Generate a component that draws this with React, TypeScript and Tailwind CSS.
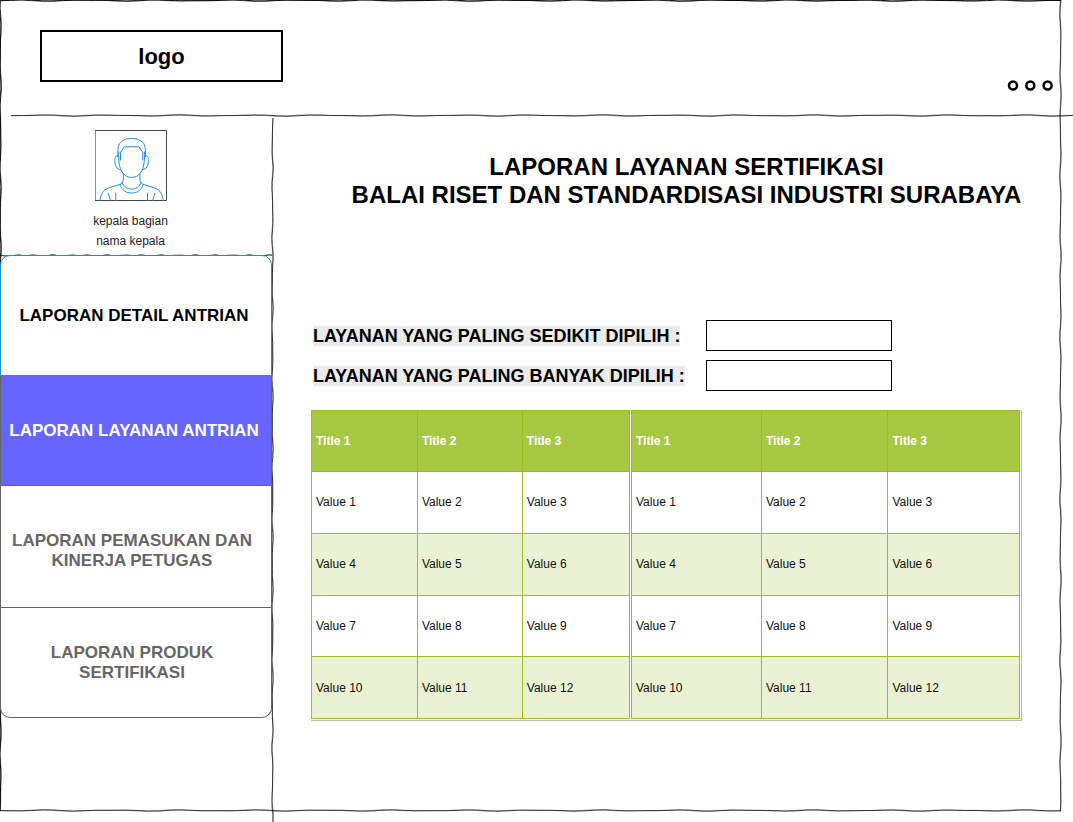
import React from "react";

/** Builds a hand-drawn looking line along a 1000-unit axis. */
function sketchPath(vertical: boolean, seed: number, center: number): string {
  const points: string[] = [];
  for (let i = 0; i <= 100; i++) {
    const along = i * 10;
    const across =
      center +
      0.45 * Math.sin(i * 0.95 + seed) +
      0.3 * Math.sin(i * 1.57 + seed * 2.3);
    const value = across.toFixed(2);
    points.push(vertical ? `${value} ${along}` : `${along} ${value}`);
  }
  return `M${points.join("L")}`;
}

type SketchProps = { vertical?: boolean; seed: number; bold?: boolean; className?: string };

function SketchLine({ vertical = false, seed, bold = false, className = "" }: SketchProps) {
  return (
    <svg
      aria-hidden="true"
      viewBox={vertical ? "0 0 4 1000" : "0 0 1000 4"}
      preserveAspectRatio="none"
      fill="none"
      stroke="#000"
      className={`pointer-events-none block overflow-visible ${className}`}
    >
      <path
        d={sketchPath(vertical, seed, 1.5)}
        strokeWidth={bold ? 0.9 : 0.7}
        vectorEffect="non-scaling-stroke"
      />
      <path
        d={sketchPath(vertical, seed + 0.6, 1.5)}
        strokeWidth={bold ? 0.7 : 0.4}
        vectorEffect="non-scaling-stroke"
      />
    </svg>
  );
}

function Avatar() {
  return (
    <svg
      viewBox="0 0 72 72"
      role="img"
      aria-label="kepala bagian"
      fill="none"
      stroke="#1e8ceb"
      strokeWidth="1"
      strokeLinecap="round"
      strokeLinejoin="round"
      className="block size-[72px]"
    >
      <rect x="0.5" y="0.5" width="71" height="70" stroke="#444" />
      <path d="M22.8 27 C22.6 20 23 15 25.4 12.6 C28 9.6 32 8.4 36.6 8.4 C41.5 8.4 45.5 10 48 12.6 C50.2 15 50.8 20 50.4 27" />
      <path d="M25.5 30 V22.5 L29 17 Q36.6 16.3 44.2 17 L47.7 22.5 V30" />
      <path d="M23.8 22 C23.4 30 24.2 36 26 40 C28.5 45 32 47.4 36.6 47.4 C41.2 47.4 44.7 45 47.2 40 C49 36 49.8 30 49.4 22" />
      <path d="M23 25.7 C20.5 25.3 19.7 27.5 19.8 30.5 C19.9 35.5 21.5 39.5 25.4 39.6 M50.2 25.7 C52.7 25.3 53.5 27.5 53.4 30.5 C53.3 35.5 51.7 39.5 47.8 39.6" />
      <path d="M28.3 43.5 V49 C28.3 52.5 26.5 54 23.5 54.8 L13 58.2 C8 60 5.5 64.5 5 70.5" />
      <path d="M44.9 43.5 V49 C44.9 52.5 46.7 54 49.7 54.8 L60.2 58.2 C65.2 60 67.7 64.5 68.2 70.5" />
      <path d="M24.8 54.5 C27 60.5 31 63 36.6 63 C42.2 63 46.2 60.5 48.4 54.5" />
      <path d="M27 52.3 C29 57 32 59 36.6 59 C41.2 59 44.2 57 46.2 52.3" />
      <path d="M13.3 63.3 L15.5 70.5 M20.7 63.3 V70.5 M59.9 63.3 L57.7 70.5 M52.5 63.3 V70.5" />
    </svg>
  );
}

const tables = [
  { id: "left", size: "flex-[319]", widths: ["w-[33.3%]", "w-[33%]", "w-[33.7%]"] },
  { id: "right", size: "flex-[389]", widths: ["w-[33.5%]", "w-[32.6%]", "w-[33.9%]"] },
];

const rows = [
  ["Value 1", "Value 2", "Value 3"],
  ["Value 4", "Value 5", "Value 6"],
  ["Value 7", "Value 8", "Value 9"],
  ["Value 10", "Value 11", "Value 12"],
];

function ReportTable({ size, widths }: { size: string; widths: string[] }) {
  return (
    <div className={`min-w-0 ${size}`}>
      <table className="h-[309px] w-full table-fixed border-collapse text-left text-xs text-[#111]">
        <thead>
          <tr className="h-[61px] bg-[#a7c942] text-white">
            {["Title 1", "Title 2", "Title 3"].map((title, i) => (
              <th key={title} scope="col" className={`border border-[#98bf21] px-1 font-bold ${widths[i]}`}>
                {title}
              </th>
            ))}
          </tr>
        </thead>
        <tbody>
          {rows.map((row) => (
            <tr key={row[0]} className="even:bg-[#eaf2d3]">
              {row.map((value) => (
                <td key={value} className="border border-[#98bf21] px-1">
                  {value}
                </td>
              ))}
            </tr>
          ))}
        </tbody>
      </table>
    </div>
  );
}

function NavLink({ className, children }: { className: string; children: React.ReactNode }) {
  return (
    <a
      href="#"
      className={`flex items-center justify-center text-center text-[17px] leading-5 font-bold ${className}`}
    >
      {children}
    </a>
  );
}

export default function App() {
  return (
    <div className="relative flex min-h-screen flex-col overflow-hidden bg-white font-['Liberation_Sans',Arial,sans-serif] text-black">
      <header className="flex h-[114px] shrink-0 items-start justify-between pt-[30px] pr-[19px] pl-10">
        <div className="flex h-[52px] w-[243px] items-center justify-center border-2 border-black text-[22px] font-bold">
          logo
        </div>
        <button type="button" aria-label="Menu" className="mt-[50px]">
          <svg viewBox="0 0 47 12" fill="none" stroke="#000" strokeWidth="2.5" className="block h-3 w-[47px]">
            <circle cx="6" cy="5.5" r="4" />
            <circle cx="23.3" cy="5.5" r="4" />
            <circle cx="40.6" cy="5.5" r="4" />
          </svg>
        </button>
      </header>
      <div className="pl-[11px]">
        <SketchLine seed={2} className="h-1 w-full" />
      </div>

      <div className="flex flex-1">
        <aside className="w-[272px] shrink-0">
          <div className="flex w-[261px] flex-col items-center pt-3 pb-[3px] text-xs leading-5 text-[#222]">
            <Avatar />
            <p className="mt-[9px]">kepala bagian</p>
            <p>nama kepala</p>
          </div>
          <SketchLine seed={5} className="h-1 w-full" />
          <nav aria-label="Laporan" className="relative z-10 -mt-[3px]">
            <NavLink className="h-[121px] rounded-t-[10px] border border-[#1e8cd2] bg-white pr-1">
              LAPORAN DETAIL ANTRIAN
            </NavLink>
            <NavLink className="h-[110px] border-x border-b border-[#666] bg-[#6666ff] pr-1 text-white">
              LAPORAN LAYANAN ANTRIAN
            </NavLink>
            <NavLink className="h-[122px] border-x border-b border-[#666] bg-white pt-2 pr-2 text-[#666]">
              LAPORAN PEMASUKAN DAN
              <br />
              KINERJA PETUGAS
            </NavLink>
            <NavLink className="h-[110px] rounded-b-[10px] border-x border-b border-[#666] bg-white pr-2 text-[#666]">
              LAPORAN PRODUK
              <br />
              SERTIFIKASI
            </NavLink>
          </nav>
        </aside>
        <div className="relative -ml-px w-1 shrink-0">
          <SketchLine vertical seed={1} className="absolute inset-0 h-full w-full" />
        </div>

        <main className="min-w-0 flex-1 pt-[35px] pr-[51px] pb-20 pl-9">
          <h1 className="ml-10 text-center text-2xl leading-7 font-bold whitespace-nowrap">
            LAPORAN LAYANAN SERTIFIKASI
            <br />
            BALAI RISET DAN STANDARDISASI INDUSTRI SURABAYA
          </h1>
          <form className="mt-[111px] grid grid-cols-[393px_186px] items-center gap-y-[9px] pl-[2px] text-lg leading-5 font-bold">
            <label htmlFor="sedikit">
              <span className="bg-[#ebebeb]">LAYANAN YANG PALING SEDIKIT DIPILIH :</span>
            </label>
            <input id="sedikit" type="text" className="h-[31px] border border-black bg-white px-2 text-sm font-normal" />
            <label htmlFor="banyak">
              <span className="bg-[#ebebeb]">LAYANAN YANG PALING BANYAK DIPILIH :</span>
            </label>
            <input id="banyak" type="text" className="h-[31px] border border-black bg-white px-2 text-sm font-normal" />
          </form>
          <div className="mt-[19px] flex gap-px border-r border-b border-[#bbb] pr-px pb-px">
            {tables.map((table) => (
              <ReportTable key={table.id} size={table.size} widths={table.widths} />
            ))}
          </div>
        </main>
      </div>

      <div className="pointer-events-none absolute inset-x-0 top-0 bottom-[11px] pr-[12px]">
        <div className="relative h-full w-full">
          <SketchLine seed={3} bold className="absolute -top-px left-0 h-1 w-full" />
          <SketchLine seed={7} className="absolute -bottom-[2px] left-0 h-1 w-full" />
          <SketchLine vertical seed={4} bold className="absolute top-0 -left-px h-full w-1" />
          <SketchLine vertical seed={9} className="absolute top-0 -right-[2px] h-full w-1" />
        </div>
      </div>
    </div>
  );
}
